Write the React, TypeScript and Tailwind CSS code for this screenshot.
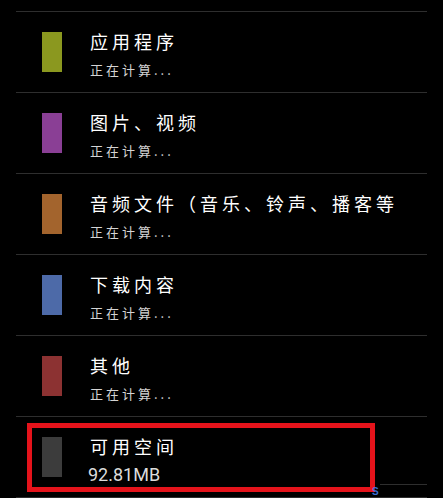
import React from 'react';

interface StorageRow {
  title: string;
  detail: string;
  color: string;
}

const rows: StorageRow[] = [
  { title: '应用程序', detail: '正在计算...', color: 'bg-[#8b981f]' },
  { title: '图片、视频', detail: '正在计算...', color: 'bg-[#8a3f95]' },
  { title: '音频文件（音乐、铃声、播客等', detail: '正在计算...', color: 'bg-[#a3642d]' },
  { title: '下载内容', detail: '正在计算...', color: 'bg-[#4d6aa8]' },
  { title: '其他', detail: '正在计算...', color: 'bg-[#8c3232]' },
];

const cjk = { fontFamily: '"Noto Sans CJK SC", "Noto Sans", sans-serif' };

function Row({ title, detail, color, numeric }: StorageRow & { numeric?: boolean }) {
  return (
    <div className="border-t border-[#2e2e2e]">
      <div className="flex h-[80px] whitespace-nowrap">
        <div className={`ml-[26px] mt-[20px] h-[40px] w-[20px] ${color}`} />
        <div className="ml-[28px] pt-[18px]">
          <div className="text-[18px] leading-[22px] tracking-[4px] text-white" style={cjk}>
            {title}
          </div>
          {numeric ? (
            <div
              className="-ml-[2px] mt-[9px] text-[18px] leading-[18px] text-[#dcdcdc]"
              style={{ fontFamily: 'Roboto, "Liberation Sans", sans-serif' }}
            >
              {detail}
            </div>
          ) : (
            <div className="mt-[10px] text-[13px] leading-[16px] tracking-[3px] text-[#d4d4d4]" style={cjk}>
              {detail}
            </div>
          )}
        </div>
      </div>
    </div>
  );
}

export default function App() {
  return (
    <div className="relative h-[498px] w-[443px] overflow-hidden bg-black">
      <div className="mx-[16px] pt-[11px]">
        {rows.map(row => (
          <Row key={row.title} {...row} />
        ))}
        <Row title="可用空间" detail="92.81MB" color="bg-[#3c3c3c]" numeric />
        <div className="border-t border-[#2e2e2e]" />
      </div>

      {/* highlight box */}
      <div className="absolute left-[27px] top-[423px] h-[69px] w-[348px] border-[5px] border-[#e5131b]" />
      <div className="absolute left-[380px] top-[484px] h-px w-[47px] bg-[#2e2e2e]" />
      <div className="absolute left-[372px] top-[486px] text-[10px] font-bold leading-[12px] text-[#3b6fd4]" style={{ fontFamily: '"Liberation Sans", sans-serif' }}>
        S
      </div>
    </div>
  );
}
